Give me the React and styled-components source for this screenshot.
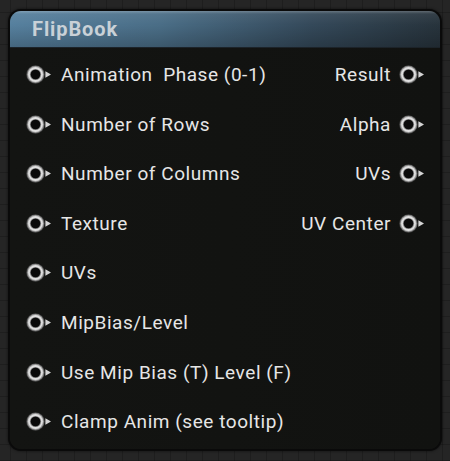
import React from 'react';
import styled, { createGlobalStyle } from 'styled-components';

const Global = createGlobalStyle`
  html, body {
    margin: 0;
    padding: 0;
    background-color: #252525;
    background-image:
      linear-gradient(to right, rgba(0,0,0,0.18) 1px, transparent 1px),
      linear-gradient(to bottom, rgba(0,0,0,0.18) 1px, transparent 1px);
    background-size: 16px 16px;
    background-position: -6px -4px;
    font-family: Roboto, "Liberation Sans", sans-serif;
  }
  #root {
    padding: 9px 0 0 8px;
    width: 450px;
    height: 461px;
    box-sizing: border-box;
  }
`;

const Node = styled.div`
  width: 434px;
  height: 442px;
  box-sizing: border-box;
  border: 2px solid #0a0a0a;
  border-radius: 13px;
  background: #121311;
  overflow: hidden;
  box-shadow: 0 0 3px rgba(0, 0, 0, 0.6);
  display: flex;
  flex-direction: column;
`;

const Header = styled.div`
  height: 36px;
  flex: none;
  display: flex;
  align-items: center;
  padding-left: 22px;
  background:
    linear-gradient(to bottom, rgba(255,255,255,0.25) 0px, rgba(255,255,255,0.06) 3px, rgba(0,0,0,0) 14px, rgba(0,0,0,0.2) 100%),
    linear-gradient(to right, #56809e 0%, #4a6d86 35%, #34495a 70%, #27333c 100%);
  border-bottom: 1px solid #1c2329;
`;

const Title = styled.span`
  font-size: 20px;
  font-weight: 700;
  color: #c9d1d7;
  letter-spacing: 0.9px;
`;

const Body = styled.div`
  flex: 1;
  display: grid;
  grid-template-columns: 1fr auto;
  grid-auto-rows: 49.55px;
  padding-top: 2px;
  background: linear-gradient(to right, #131412, #111210);
`;

const Pin = styled.div`
  display: flex;
  align-items: center;
  gap: ${p => (p.$right ? '8px' : '9px')};
  justify-content: ${p => (p.$right ? 'flex-end' : 'flex-start')};
  padding: ${p => (p.$right ? '0 15px 0 0' : '0 0 0 16px')};
  font-size: 19px;
  letter-spacing: 0.55px;
  color: #e6e6e6;
  white-space: pre;
`;

const PinIcon = () => (
  <svg width="26" height="19" viewBox="0 0 26 19">
    <circle cx="9.5" cy="9.5" r="9.2" fill="#4a4a4a" />
    <circle cx="9.5" cy="9.5" r="8.4" fill="#9a9a9a" />
    <circle cx="9.5" cy="9.5" r="7.4" fill="#e0e0e0" />
    <circle cx="9.5" cy="9.5" r="5.6" fill="#808080" />
    <circle cx="9.5" cy="9.5" r="4.8" fill="#0a0a0a" />
    <path d="M19.4 6.2 L25 9.5 L19.4 12.8 Z" fill="#d4d4d4" />
  </svg>
);

const inputs = [
  'Animation  Phase (0-1)',
  'Number of Rows',
  'Number of Columns',
  'Texture',
  'UVs',
  'MipBias/Level',
  'Use Mip Bias (T) Level (F)',
  'Clamp Anim (see tooltip)',
];

const outputs = ['Result', 'Alpha', 'UVs', 'UV Center'];

export default function App() {
  return (
    <>
      <Global />
      <Node>
        <Header>
          <Title>FlipBook</Title>
        </Header>
        <Body>
          {inputs.map((label, i) => (
            <React.Fragment key={label}>
              <Pin>
                <PinIcon />
                {label}
              </Pin>
              <Pin $right>
                {outputs[i] && (
                  <>
                    {outputs[i]}
                    <PinIcon />
                  </>
                )}
              </Pin>
            </React.Fragment>
          ))}
        </Body>
      </Node>
    </>
  );
}
